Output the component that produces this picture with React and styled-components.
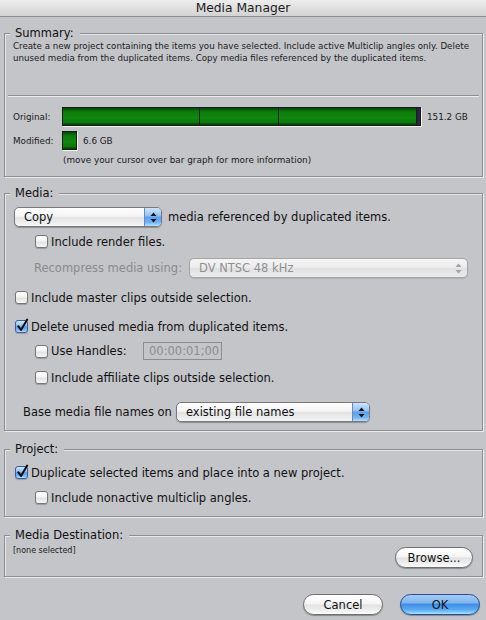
import React from 'react';
import styled, { createGlobalStyle, css } from 'styled-components';

const GlobalStyle = createGlobalStyle`
  html, body { margin: 0; padding: 0; background: #c4c5c9; }
  body { font-family: "DejaVu Sans", "Lucida Grande", sans-serif; }
  * { box-sizing: border-box; }
`;

const BG = '#c4c5c9';
const AQUA_BLUE = 'linear-gradient(#cfe4fb 0%, #93c3f3 42%, #5aa0ec 52%, #6fb5f6 80%, #b2e2ff 100%)';

const Window = styled.div`
  width: 486px;
  height: 620px;
  background: ${BG};
  display: flex;
  flex-direction: column;
  overflow: hidden;
  color: #111;
`;

const TitleBar = styled.div`
  height: 17px;
  flex: none;
  background: linear-gradient(#ededed, #d3d3d3);
  border-bottom: 1px solid #8d8d8d;
  display: flex;
  align-items: center;
  justify-content: center;
  font-size: 12.3px;
  line-height: 16px;
  color: #1c1c1c;
`;

const Body = styled.div`
  display: flex;
  flex-direction: column;
  padding: 0 3px 0 4px;
`;

const Group = styled.section`
  position: relative;
  margin-top: ${p => p.$mt}px;
  padding: 0 8px ${p => p.$pb}px;
  border: 1px solid #8e8e90;
  box-shadow: inset 1px 1px 0 #e6e6e8, 1px 1px 0 #ececee;
  display: flex;
  flex-direction: column;
`;

const Legend = styled.span`
  position: absolute;
  top: -8px;
  left: 5px;
  padding: 0 6px 0 5px;
  background: ${BG};
  font-size: 11.5px;
  line-height: 14px;
  color: #111;
`;

const SummaryText = styled.div`
  height: 61px;
  padding-top: 6px;
  font-size: 8.7px;
  line-height: 12px;
  color: #1a1a1a;
  white-space: nowrap;
`;

const Separator = styled.div`
  margin: 0 -5px;
  height: 2px;
  border-top: 1px solid #8e8e90;
  border-bottom: 1px solid #ececee;
`;

const GraphRow = styled.div`
  display: flex;
  align-items: center;
  height: 19px;
  margin-top: ${p => p.$mt}px;
`;

const SmallLabel = styled.span`
  font-size: 8.8px;
  color: #1a1a1a;
  width: ${p => (p.$w ? `${p.$w}px` : 'auto')};
  margin-left: ${p => p.$ml || 0}px;
  flex: none;
`;

const Bar = styled.div`
  width: ${p => p.$w}px;
  height: 19px;
  border: 1px solid #1b1b1d;
  box-shadow: 1px 1px 0 #f2f2f2;
  display: flex;
  background: #2a2540;
  flex: none;
`;

const Segment = styled.div`
  width: ${p => (p.$w ? `${p.$w}px` : 'auto')};
  flex: ${p => (p.$w ? 'none' : '1')};
  height: 100%;
  border-right: ${p => (p.$divider ? '1px solid #1b1b1d' : 'none')};
  background: linear-gradient(#064806 0%, #0b7a0b 22%, #0e8a0e 55%, #0b780b 85%, #053c05 100%);
`;

const Note = styled.div`
  margin-top: 4px;
  padding-left: 50px;
  font-size: 8.85px;
  line-height: 12px;
  color: #1a1a1a;
`;

const Row = styled.div`
  display: flex;
  align-items: center;
  height: ${p => p.$h || 15}px;
  margin-top: ${p => p.$mt}px;
  padding-left: ${p => p.$indent || 0}px;
  font-size: 11.5px;
  line-height: 14px;
  color: ${p => (p.$disabled ? '#8a8a8c' : '#111')};
`;

const Label = styled.span`
  margin-left: ${p => p.$ml || 0}px;
  width: ${p => (p.$w ? `${p.$w}px` : 'auto')};
  flex: none;
  white-space: nowrap;
`;

const Box = styled.span`
  position: relative;
  width: 13px;
  height: 13px;
  flex: none;
  border-radius: 3px;
  border: 1px solid ${p => (p.$checked ? '#3b5d9a' : '#767678')};
  background: ${p => (p.$checked ? AQUA_BLUE : 'linear-gradient(#ffffff, #f4f4f4 45%, #e2e2e2 55%, #f7f7f7)')};
  box-shadow: 0 1px 1px rgba(0, 0, 0, 0.2);
  margin-right: 3px;
`;

const CheckMark = styled.svg`
  position: absolute;
  left: 0px;
  top: -3px;
  overflow: visible;
`;

const Checkbox = ({ checked }) => (
  <Box $checked={checked}>
    {checked && (
      <CheckMark width="13" height="14" viewBox="0 0 13 14">
        <path d="M2.2 8.2 L5 12 L11.2 1.5" fill="none" stroke="#0b0b0b" strokeWidth="2" strokeLinecap="round" strokeLinejoin="round" />
      </CheckMark>
    )}
  </Box>
);

const Popup = styled.div`
  width: ${p => p.$w}px;
  height: 20px;
  flex: none;
  display: flex;
  align-items: stretch;
  border: 1px solid ${p => (p.$disabled ? '#a6a6a8' : '#79797b')};
  border-radius: 5px;
  overflow: hidden;
  background: ${p =>
    p.$disabled
      ? 'linear-gradient(#f4f4f4, #ececec 48%, #e1e1e1 52%, #ebebeb)'
      : 'linear-gradient(#ffffff, #f4f4f4 45%, #e3e3e3 55%, #f6f6f6)'};
  box-shadow: 0 1px 1px rgba(0, 0, 0, ${p => (p.$disabled ? 0.1 : 0.28)});
`;

const PopupText = styled.span`
  flex: 1;
  display: flex;
  align-items: center;
  padding-left: 9px;
  font-size: 11.5px;
  color: ${p => (p.$disabled ? '#909092' : '#111')};
  white-space: nowrap;
`;

const PopupArrows = styled.span`
  width: 17px;
  flex: none;
  display: flex;
  align-items: center;
  justify-content: center;
  ${p =>
    !p.$disabled &&
    css`
      background: ${AQUA_BLUE};
      border-left: 1px solid #6a88bd;
    `}
`;

const Arrows = ({ color }) => (
  <svg width="7" height="11" viewBox="0 0 7 11">
    <path d="M3.5 0.5 L6.5 4 L0.5 4 Z" fill={color} />
    <path d="M3.5 10.5 L6.5 7 L0.5 7 Z" fill={color} />
  </svg>
);

const PopupButton = ({ w, disabled, children }) => (
  <Popup $w={w} $disabled={disabled}>
    <PopupText $disabled={disabled}>{children}</PopupText>
    <PopupArrows $disabled={disabled}>
      <Arrows color={disabled ? '#a2a2a4' : '#101018'} />
    </PopupArrows>
  </Popup>
);

const Field = styled.span`
  width: 79px;
  height: 18px;
  flex: none;
  border: 1px solid #8c8c8e;
  display: flex;
  align-items: center;
  padding-left: 5px;
  font-size: 11.5px;
  color: #8c8c8e;
`;

const DestRow = styled.div`
  display: flex;
  justify-content: space-between;
  align-items: flex-start;
  padding-top: 9px;
`;

const DestText = styled.span`
  font-size: 8px;
  line-height: 12px;
  color: #1a1a1a;
`;

const PushButton = styled.button`
  width: ${p => p.$w}px;
  height: 21px;
  flex: none;
  margin-top: ${p => p.$mt || 0}px;
  margin-right: ${p => p.$mr || 0}px;
  padding: 0;
  border-radius: 11px;
  border: 1px solid ${p => (p.$default ? '#2c4b94' : '#6f6f71')};
  background: ${p =>
    p.$default
      ? 'linear-gradient(#a8cbf3 0%, #7fb6ef 40%, #3f8fe6 50%, #58acf4 78%, #a9e2ff 100%)'
      : 'linear-gradient(#ffffff, #f5f5f5 45%, #e3e3e3 52%, #ececec 75%, #fcfcfc)'};
  box-shadow: 0 1px 1px rgba(0, 0, 0, 0.3);
  font-family: "DejaVu Sans", "Lucida Grande", sans-serif;
  font-size: 11.5px;
  color: #111;
`;

const Footer = styled.div`
  display: flex;
  justify-content: flex-end;
  gap: 17px;
  margin-top: 17px;
  padding-right: 3px;
`;

const segments = [
  { w: 137, divider: true },
  { w: 79, divider: true },
  { w: 138, divider: true },
];

export default function App() {
  return (
    <>
      <GlobalStyle />
      <Window>
        <TitleBar>Media Manager</TitleBar>
        <Body>
          <Group $mt={16} $pb={10}>
            <Legend>Summary:</Legend>
            <SummaryText>
              Create a new project containing the items you have selected. Include active Multiclip angles only. Delete
              <br />
              unused media from the duplicated items. Copy media files referenced by the duplicated items.
            </SummaryText>
            <Separator />
            <GraphRow $mt={10}>
              <SmallLabel $w={49}>Original:</SmallLabel>
              <Bar $w={359}>
                {segments.map((s, i) => (
                  <Segment key={i} $w={s.w} $divider={s.divider} />
                ))}
              </Bar>
              <SmallLabel $ml={6}>151.2 GB</SmallLabel>
            </GraphRow>
            <GraphRow $mt={5}>
              <SmallLabel $w={49}>Modified:</SmallLabel>
              <Bar $w={15}>
                <Segment />
              </Bar>
              <SmallLabel $ml={6}>6.6 GB</SmallLabel>
            </GraphRow>
            <Note>(move your cursor over bar graph for more information)</Note>
          </Group>

          <Group $mt={16} $pb={8}>
            <Legend>Media:</Legend>
            <Row $h={20} $mt={13} $indent={1}>
              <PopupButton w={148}>Copy</PopupButton>
              <Label $ml={6}>media referenced by duplicated items.</Label>
            </Row>
            <Row $mt={7} $indent={22}>
              <Checkbox />
              <Label>Include render files.</Label>
            </Row>
            <Row $h={20} $mt={9} $indent={21} $disabled>
              <Label $w={155}>Recompress media using:</Label>
              <PopupButton w={279} disabled>
                DV NTSC 48 kHz
              </PopupButton>
            </Row>
            <Row $mt={12} $indent={2}>
              <Checkbox />
              <Label>Include master clips outside selection.</Label>
            </Row>
            <Row $mt={14} $indent={2}>
              <Checkbox checked />
              <Label>Delete unused media from duplicated items.</Label>
            </Row>
            <Row $h={18} $mt={8} $indent={22}>
              <Checkbox />
              <Label $w={92}>Use Handles:</Label>
              <Field>00:00:01;00</Field>
            </Row>
            <Row $mt={10} $indent={22}>
              <Checkbox />
              <Label>Include affiliate clips outside selection.</Label>
            </Row>
            <Row $h={20} $mt={17} $indent={10}>
              <Label $w={153}>Base media file names on</Label>
              <PopupButton w={194}>existing file names</PopupButton>
            </Row>
          </Group>

          <Group $mt={18} $pb={11}>
            <Legend>Project:</Legend>
            <Row $mt={15} $indent={2}>
              <Checkbox checked />
              <Label>Duplicate selected items and place into a new project.</Label>
            </Row>
            <Row $mt={10} $indent={22}>
              <Checkbox />
              <Label>Include nonactive multiclip angles.</Label>
            </Row>
          </Group>

          <Group $mt={18} $pb={8}>
            <Legend>Media Destination:</Legend>
            <DestRow>
              <DestText>[none selected]</DestText>
              <PushButton $w={78} $mt={2} $mr={1}>Browse...</PushButton>
            </DestRow>
          </Group>

          <Footer>
            <PushButton $w={80}>Cancel</PushButton>
            <PushButton $w={80} $default>OK</PushButton>
          </Footer>
        </Body>
      </Window>
    </>
  );
}
